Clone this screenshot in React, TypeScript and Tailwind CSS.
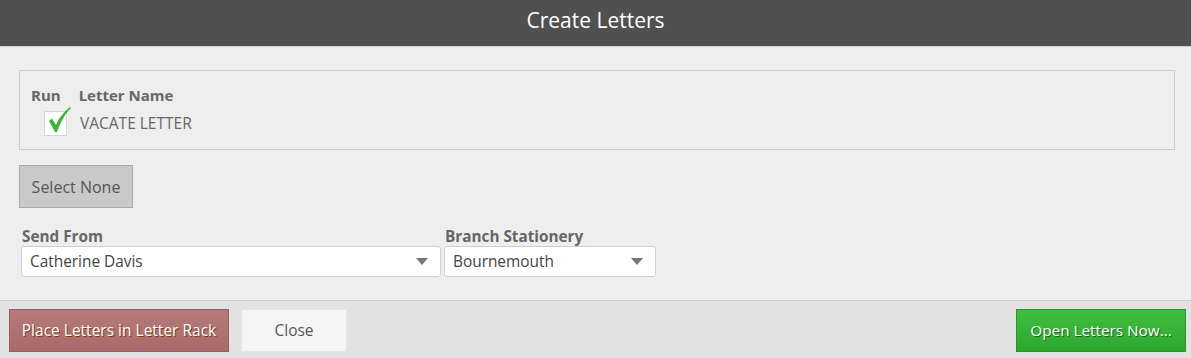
import React from "react";

const Caret = () => (
  <svg width="12" height="7" viewBox="0 0 12 7" className="shrink-0">
    <path d="M0 0h12L6 7z" fill="#777" />
  </svg>
);

const Select = ({ value, width }: { value: string; width: string }) => (
  <div
    className={`${width} h-[31px] bg-white border border-[#cfcfcf] rounded-[3px] flex items-center justify-between pl-[8px] pr-[12px] text-[15.4px] text-[#444]`}
  >
    <span>{value}</span>
    <Caret />
  </div>
);

const App = () => {
  return (
    <div className="w-[1191px] h-[358px] bg-[#eeeeee] flex flex-col font-['Open_Sans',sans-serif] overflow-hidden">
      {/* HEADER */}
      <div className="h-[47px] bg-[#505050] border-b border-[#d4d4d4] flex items-center justify-center text-white text-[21px] pb-[4px]">
        Create Letters
      </div>

      {/* BODY */}
      <div className="flex-1 px-[19px] pt-[23px]">
        <div className="w-[1156px] h-[80px] border border-[#cccccc] pl-[11px] pt-[14px]">
          <div className="flex gap-[18px] text-[15px] font-bold text-[#666] leading-[20px]">
            <span>Run</span>
            <span>Letter Name</span>
          </div>
          <div className="flex items-center mt-[6px]">
            <div className="relative ml-[13px] w-[23px] h-[25px] bg-white border border-[#d6d6d6]">
              <svg width="28" height="28" viewBox="0 0 28 28" className="absolute left-[1px] top-[-6px]">
                <path
                  d="M3 15 L6 12.5 L10 19 C13 12 17 7 24 1 L25 2 C19 8 15 15 11 26 L9 26 Z"
                  fill="#3db23d"
                />
              </svg>
            </div>
            <span className="ml-[13px] text-[15.5px] text-[#666]">VACATE LETTER</span>
          </div>
        </div>

        <button className="mt-[15px] h-[43px] w-[114px] bg-[#c9c9c9] border border-[#a9a9a9] text-[16px] text-[#555]">
          Select None
        </button>

        <div className="flex gap-[3px] mt-[18px] ml-[2px]">
          <div className="flex flex-col">
            <span className="text-[15.3px] font-bold text-[#666] leading-[20px] ml-[1px]">Send From</span>
            <Select value="Catherine Davis" width="w-[420px]" />
          </div>
          <div className="flex flex-col">
            <span className="text-[15.3px] font-bold text-[#666] leading-[20px] ml-[1px]">Branch Stationery</span>
            <Select value="Bournemouth" width="w-[212px]" />
          </div>
        </div>
      </div>

      {/* FOOTER */}
      <div className="h-[58px] bg-[#e2e2e2] border-t border-[#cfcfcf] flex items-start pt-[8px] px-[9px]">
        <button className="h-[43px] w-[220px] bg-[linear-gradient(#b57b7b,#a86a6a)] border border-[#9a5e5e] text-white text-[15.5px] [text-shadow:1px_1px_0_#7a4010]">
          Place Letters in Letter Rack
        </button>
        <button className="ml-[12px] h-[43px] w-[106px] bg-[#f5f5f5] border border-[#e6e6e6] text-[#555] text-[15.5px]">
          Close
        </button>
        <button className="ml-auto mr-[-4px] h-[43px] w-[170px] bg-[linear-gradient(#3fbf3f,#2ea62e)] border border-[#2a952a] text-white text-[15.3px] [text-shadow:1px_1px_0_#1f6a1f]">
          Open Letters Now...
        </button>
      </div>
    </div>
  );
};

export default App;
